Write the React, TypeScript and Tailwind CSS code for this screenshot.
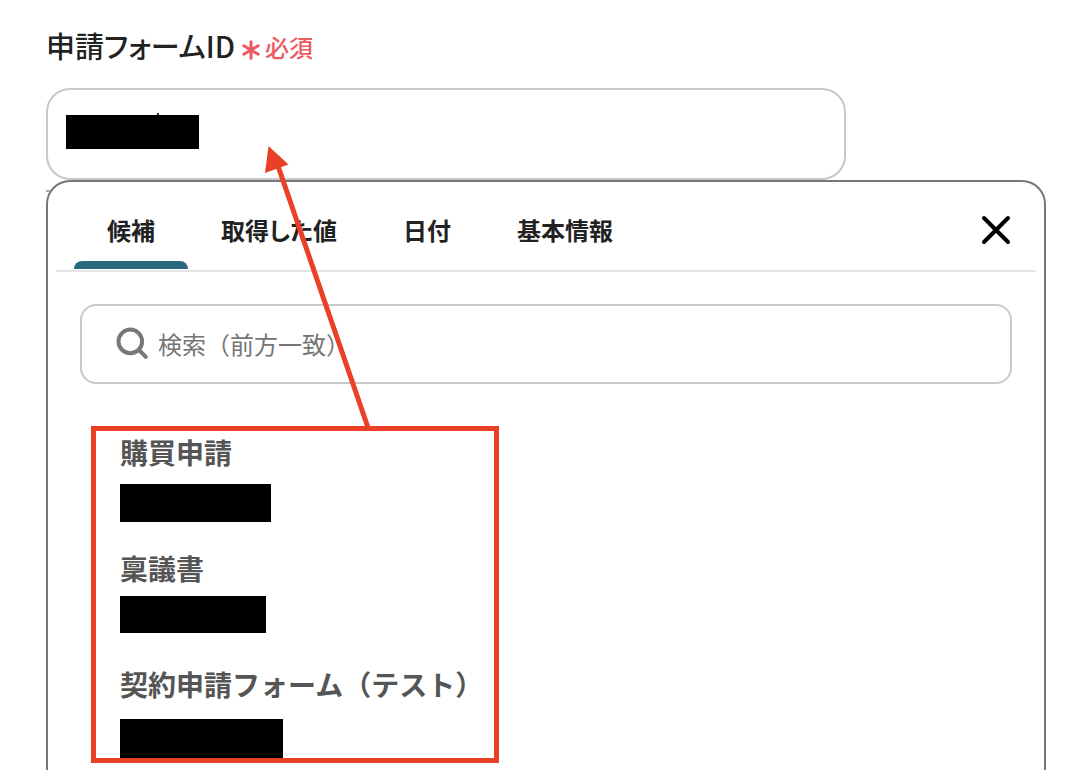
import { useState } from "react";

const tabs = ["候補", "取得した値", "日付", "基本情報"];

const candidates = [
  { name: "購買申請", bar: "mt-3 h-[38px] w-[151px]" },
  { name: "稟議書", bar: "mt-2 h-[37px] w-[146px]" },
  { name: "契約申請フォーム（テスト）", bar: "mt-[15px] h-[39px] w-[163px]" },
];

function SearchIcon() {
  return (
    <svg className="h-8 w-8 shrink-0 overflow-visible" viewBox="0 0 32 32" fill="none" stroke="#777777" strokeWidth="4" aria-hidden="true">
      <circle cx="14.3" cy="13.4" r="11.8" />
      <path d="M23 22l6.8 6.8" strokeLinecap="round" />
    </svg>
  );
}

function RequiredMark() {
  return (
    <svg className="h-5 w-5" viewBox="0 0 20 20" fill="none" stroke="#ee5a64" strokeWidth="3" strokeLinecap="round" aria-hidden="true">
      <path d="M10 1.8v16.4M2.8 5.8l14.4 8.4M17.2 5.8L2.8 14.2" />
    </svg>
  );
}

function Arrow() {
  return (
    <svg className="pointer-events-none absolute -top-10 left-[210px] h-[290px] w-[120px]" viewBox="0 0 120 290" aria-hidden="true">
      <path d="M20 24L110.500 287" stroke="#ea4025" strokeWidth="5" />
      <path d="M10.500 4L7 31L30.500 22.500Z" fill="#ea4025" />
    </svg>
  );
}

export default function App() {
  const [active, setActive] = useState(0);
  return (
    <main
      lang="ja"
      className="flex min-h-screen flex-col overflow-hidden bg-white pr-8 pl-[46px] font-['Noto_Sans_CJK_JP',sans-serif] text-[#222222]"
    >
      <div className="flex h-[88px] items-center gap-1.5 pt-0.5">
        <label htmlFor="form-id" className="text-[29px] leading-10 font-medium [font-feature-settings:'palt']">
          申請フォームID
        </label>
        <span className="flex items-center gap-1 pt-1 text-2xl font-medium text-[#ee5a64]">
          <span className="pt-1.5">
            <RequiredMark />
          </span>
          必須
        </span>
      </div>

      <div className="flex h-[92px] w-4/5 items-center rounded-3xl border-2 border-[#c8c8c8] pr-5 pl-[18px]">
        <span className="relative mb-1 h-[34px] w-[133px] shrink-0 bg-black">
          <span className="absolute -top-0.5 left-[91px] h-0.5 w-0.5 bg-[#222222]" />
        </span>
        <input id="form-id" type="text" className="h-full min-w-0 flex-1 bg-transparent text-2xl outline-none" />
      </div>

      <section className="relative flex-1 rounded-t-3xl border-2 border-b-0 border-[#777777]">
        <div className="mx-2 flex h-[90px] items-stretch justify-between border-b-2 border-[#e4e4e4] pr-6 pl-[18px]">
          <div role="tablist" className="flex">
            {tabs.map((tab, i) => (
              <button
                key={tab}
                type="button"
                role="tab"
                aria-selected={i === active}
                onClick={() => setActive(i)}
                className="flex flex-col text-2xl leading-9 font-bold whitespace-nowrap [font-feature-settings:'palt']"
              >
                <span className="px-[33px] pt-[30px] pb-[13px]">{tab}</span>
                <span className={i === active ? "h-2 w-full rounded-t-lg bg-[#2c6780]" : "h-2 w-full"} />
              </button>
            ))}
          </div>
          <button type="button" aria-label="閉じる" className="self-center pt-2">
            <svg className="h-8 w-8" viewBox="0 0 32 32" fill="none" stroke="#000000" strokeWidth="4" strokeLinecap="round">
              <path d="M4 4l24 24M28 4L4 28" />
            </svg>
          </button>
        </div>

        <div className="px-8 pt-8">
          <label className="flex h-20 items-center gap-2.5 rounded-2xl border-2 border-[#c8c8c8] px-[34px]">
            <SearchIcon />
            <input
              type="text"
              aria-label="検索（前方一致）"
              placeholder="検索（前方一致）"
              className="min-w-0 flex-1 bg-transparent text-2xl outline-none placeholder:text-[#757575]"
            />
          </label>
        </div>

        <ul className="mt-[42px] ml-[43px] h-[337px] w-[408px] border-5 border-[#ea4025] pl-6">
          {candidates.map((item) => (
            <li key={item.name} className="h-[116px] pt-px text-[28px] leading-10 font-bold text-[#555555]">
              <div className="whitespace-nowrap">{item.name}</div>
              <div className={`bg-black ${item.bar}`} />
            </li>
          ))}
        </ul>

        <span className="absolute top-2 -left-0.5 h-0.5 w-1 bg-[#aaaaaa]" />
        <Arrow />
      </section>
    </main>
  );
}
